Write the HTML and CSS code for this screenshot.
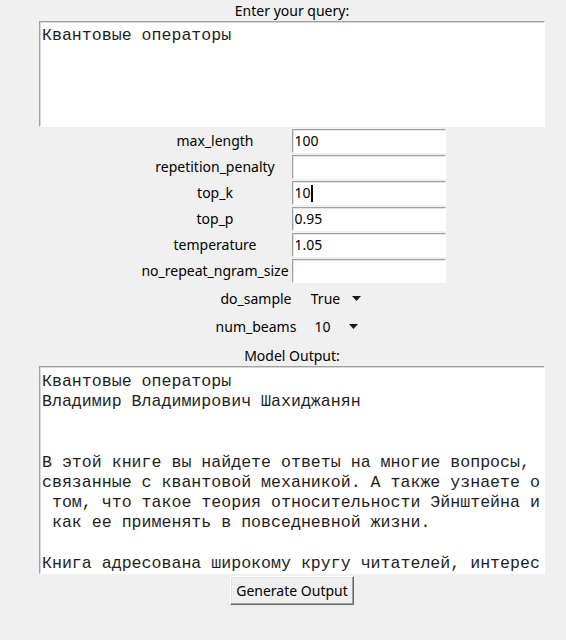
FILE: index.html
```html
<!DOCTYPE html>
<html lang="ru">
<head>
<meta charset="utf-8">
<title>Query</title>
<link rel="stylesheet" href="styles.css">
</head>
<body>
<div class="app">
  <div class="lbl">Enter your query:</div>
  <div class="textbox query"><pre>Квантовые операторы</pre></div>

  <div class="params">
    <div class="plabel">max_length</div><div class="entry">100</div>
    <div class="plabel">repetition_penalty</div><div class="entry"></div>
    <div class="plabel">top_k</div><div class="entry">10<span class="caret"></span></div>
    <div class="plabel">top_p</div><div class="entry">0.95</div>
    <div class="plabel">temperature</div><div class="entry">1.05</div>
    <div class="plabel">no_repeat_ngram_size</div><div class="entry"></div>
  </div>

  <div class="options">
    <span class="olabel">do_sample</span>
    <span class="omenu gap-s"><span class="oval">True</span><svg class="arrow" width="9" height="5" viewBox="0 0 9 5"><polygon points="0,0 9,0 4.5,5" fill="#1a1a1a"/></svg></span>
    <span class="olabel">num_beams</span>
    <span class="omenu gap-l"><span class="oval">10</span><svg class="arrow" width="9" height="5" viewBox="0 0 9 5"><polygon points="0,0 9,0 4.5,5" fill="#1a1a1a"/></svg></span>
  </div>

  <div class="lbl out-lbl">Model Output:</div>
  <div class="textbox output"><pre>Квантовые операторы
Владимир Владимирович Шахиджанян


В этой книге вы найдете ответы на многие вопросы,
связанные с квантовой механикой. А также узнаете о
 том, что такое теория относительности Эйнштейна и
 как ее применять в повседневной жизни.

Книга адресована широкому кругу читателей, интерес</pre></div>

  <div class="btnrow"><button class="btn">Generate Output</button></div>
</div>
</body>
</html>
```

FILE: styles.css
```css
html, body {
  margin: 0;
  padding: 0;
  background: #f0f0f0;
  overflow: hidden;
}

.app {
  width: 584px;
  display: flex;
  flex-direction: column;
  align-items: center;
  font-family: "Noto Sans", "Open Sans", sans-serif;
  font-size: 14px;
  color: #000;
}

.lbl {
  height: 21px;
  line-height: 21px;
}

.out-lbl {
  margin-top: 5px;
}

.textbox {
  box-sizing: border-box;
  width: 506px;
  background: #fff;
  border-top: 1px solid #a0a0a0;
  border-left: 1px solid #a0a0a0;
  border-right: 1px solid #fff;
  border-bottom: 1px solid #fff;
  box-shadow: inset 1px 1px 0 #d8d8d8;
  padding: 4px 2px 0 2px;
  overflow: hidden;
}

.textbox pre {
  margin: 0;
  font-family: "Liberation Mono", "DejaVu Sans Mono", monospace;
  font-size: 16.6px;
  line-height: 20.2px;
  color: #1e1e1e;
  white-space: pre;
}

.query {
  height: 106px;
}

.output {
  height: 208px;
  padding-top: 5px;
}

.params {
  display: grid;
  grid-template-columns: auto 154px;
  column-gap: 3px;
  margin-top: 1px;
  margin-left: 3px;
}

.plabel {
  height: 26px;
  line-height: 26px;
  text-align: center;
}

.entry {
  box-sizing: border-box;
  height: 24px;
  margin: 1px 0;
  background: #fff;
  border-top: 1px solid #a0a0a0;
  border-left: 1px solid #a0a0a0;
  border-right: 1px solid #fff;
  border-bottom: 1px solid #fff;
  box-shadow: inset 1px 1px 0 #e3e3e3;
  padding-left: 2px;
  line-height: 22px;
  display: flex;
  align-items: center;
}

.caret {
  display: inline-block;
  width: 2px;
  height: 17px;
  background: #000;
}

.options {
  display: grid;
  grid-template-columns: 84px 76px;
  grid-auto-rows: 28px;
  align-items: center;
  justify-items: center;
  margin-left: 4px;
}

.omenu {
  display: flex;
  align-items: center;
}

.gap-s .arrow {
  margin-left: 12px;
}

.gap-l .arrow {
  margin-left: 18px;
}

.arrow {
  display: block;
}

.btnrow {
  margin-top: 2px;
  display: flex;
  justify-content: center;
}

.btn {
  font-family: "Noto Sans", "Open Sans", sans-serif;
  font-size: 14px;
  color: #000;
  background: #f0f0f0;
  height: 29px;
  padding: 0 5px;
  border-top: 1px solid #fff;
  border-left: 1px solid #fff;
  border-right: 1px solid #696969;
  border-bottom: 1px solid #696969;
  box-shadow: inset -1px -1px 0 #a0a0a0, inset 1px 1px 0 #e3e3e3;
  border-radius: 0;
}
```
